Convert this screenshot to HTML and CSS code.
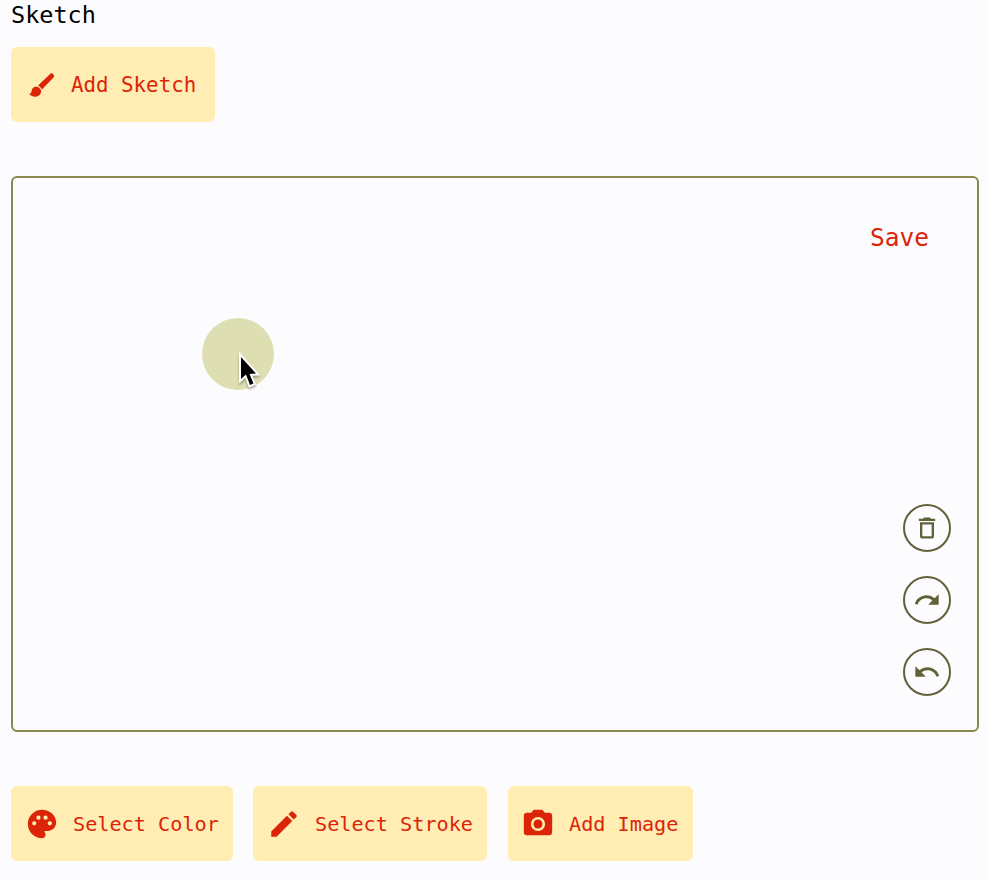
FILE: index.html
```html
<!DOCTYPE html>
<html lang="en">
<head>
<meta charset="utf-8">
<title>Sketch</title>
<link rel="stylesheet" href="styles.css">
</head>
<body>
<main class="page">
  <h1 class="title">Sketch</h1>
  <button class="btn add-sketch"><svg viewBox="0 0 24 24"><path d="M7.200 13.300c-2 0-3.500 1.500-3.500 3.500 0 1.300-1 2-1.900 2.100 1 1.500 2.900 2.400 5 2.400 2.500 0 4.500-1.900 4.500-4.300 0-2-1.800-3.700-4.100-3.700zM21 3.300a1.900 1.900 0 0 0-2.700 0L9 12.200l3.100 3.100L21 6.200a2 2 0 0 0 0-2.900z"/></svg><span>Add Sketch</span></button>
  <section class="canvas">
    <button class="save">Save</button>
    <div class="pointer"><svg viewBox="0 0 24 38"><path d="M3 5v22l5-4.500 4 10.500 3.500-1.500-4-9.500 6.500-.5z"/></svg></div>
    <div class="tools">
      <button class="tool" aria-label="Delete"><svg viewBox="0 0 24 24"><path d="M6 19c0 1.100.9 2 2 2h8c1.100 0 2-.9 2-2V7H6v12zM8 9h8v10H8V9zm7.500-5l-1-1h-5l-1 1H5v2h14V4z"/></svg></button>
      <button class="tool" aria-label="Redo"><svg viewBox="0 0 24 24"><path d="M18.400 10.600C16.550 8.990 14.150 8 11.500 8c-4.650 0-8.580 3.030-9.960 7.220L3.900 16c1.050-3.190 4.050-5.500 7.600-5.500 1.950 0 3.730.72 5.120 1.880L13 16h9V7l-3.600 3.600z"/></svg></button>
      <button class="tool" aria-label="Undo"><svg viewBox="0 0 24 24"><path d="M12.500 8c-2.650 0-5.050.99-6.900 2.600L2 7v9h9l-3.620-3.620c1.390-1.160 3.160-1.880 5.120-1.880 3.540 0 6.550 2.310 7.600 5.500l2.370-.78C21.080 11.030 17.150 8 12.500 8z"/></svg></button>
    </div>
  </section>
  <div class="actions">
    <button class="btn color"><svg viewBox="0 0 24 24"><path d="M12 2C6.490 2 2 6.490 2 12s4.490 10 10 10c1.380 0 2.500-1.120 2.500-2.500 0-.61-.23-1.200-.64-1.670-.08-.1-.13-.21-.13-.33 0-.28.22-.5.5-.5H16c3.310 0 6-2.690 6-6 0-4.960-4.490-9-10-9zm-5.500 11a1.500 1.500 0 1 1 0-3 1.500 1.500 0 0 1 0 3zm3-4a1.500 1.500 0 1 1 0-3 1.500 1.500 0 0 1 0 3zm5 0a1.500 1.500 0 1 1 0-3 1.500 1.500 0 0 1 0 3zm3 4a1.500 1.500 0 1 1 0-3 1.500 1.500 0 0 1 0 3z"/></svg><span>Select Color</span></button>
    <button class="btn stroke"><svg viewBox="0 0 24 24"><path d="M3 17.250V21h3.750L17.810 9.940l-3.750-3.750L3 17.250zM20.710 7.040a1 1 0 0 0 0-1.410l-2.340-2.340a1 1 0 0 0-1.410 0l-1.830 1.830 3.750 3.750 1.830-1.830z"/></svg><span>Select Stroke</span></button>
    <button class="btn image"><svg viewBox="0 0 24 24"><circle cx="12" cy="12" r="3.200"/><path d="M9 2L7.170 4H4c-1.100 0-2 .9-2 2v12c0 1.100.9 2 2 2h16c1.100 0 2-.9 2-2V6c0-1.100-.9-2-2-2h-3.170L15 2H9zm3 15a5 5 0 1 1 0-10 5 5 0 0 1 0 10z"/></svg><span>Add Image</span></button>
  </div>
</main>
</body>
</html>
```
FILE: styles.css
```css
* { box-sizing: border-box; }

body {
  margin: 0;
  background: #fcfcff;
  font-family: "DejaVu Sans Mono", "Liberation Mono", monospace;
}

.page {
  display: flex;
  flex-direction: column;
  align-items: flex-start;
  height: 880px;
  padding: 0 9px 0 11px;
}

.title {
  margin: 0 0 17px;
  height: 30px;
  font-size: 23.500px;
  font-weight: 400;
  line-height: 30px;
  color: #000;
}

button {
  margin: 0;
  border: 0;
  padding: 0;
  background: none;
  font-family: inherit;
  color: #dc2408;
}

.btn {
  display: flex;
  align-items: center;
  gap: 14px;
  height: 75px;
  padding-left: 14px;
  border-radius: 6px;
  background: #ffedb3;
  font-size: 20.200px;
  white-space: pre;
}

.btn svg {
  flex: none;
  width: 34px;
  height: 34px;
  fill: #dc2408;
}

.add-sketch { width: 204px; padding-left: 16px; font-size: 20.800px; }
.add-sketch svg { width: 30px; height: 30px; }

.canvas {
  position: relative;
  width: 968px;
  height: 556px;
  margin: 54px 0;
  border: 2px solid #8b894e;
  border-radius: 6px;
}

.save {
  position: absolute;
  top: 44px;
  right: 48px;
  font-size: 24.500px;
  line-height: 32px;
}

.pointer {
  position: absolute;
  left: 189px;
  top: 140px;
  width: 72px;
  height: 72px;
  border-radius: 50%;
  background: #dedeb3;
}

.pointer svg {
  position: absolute;
  left: 36px;
  top: 34px;
  width: 24px;
  height: 38px;
  fill: #000;
  stroke: #fff;
  stroke-width: 4;
  paint-order: stroke;
  overflow: visible;
  filter: drop-shadow(0 2px 1px rgb(0 0 0 / 30%));
}

.tools {
  position: absolute;
  right: 26px;
  bottom: 34px;
  display: flex;
  flex-direction: column;
  gap: 24px;
}

.tool {
  display: grid;
  place-items: center;
  width: 48px;
  height: 48px;
  border: 2px solid #626038;
  border-radius: 50%;
}

.tool svg { width: 28px; height: 28px; fill: #626038; }

.actions { display: flex; }
.color { width: 222px; margin-right: 20px; }
.stroke { width: 234px; margin-right: 21px; }
.image { width: 185px; padding-left: 13px; }
```
